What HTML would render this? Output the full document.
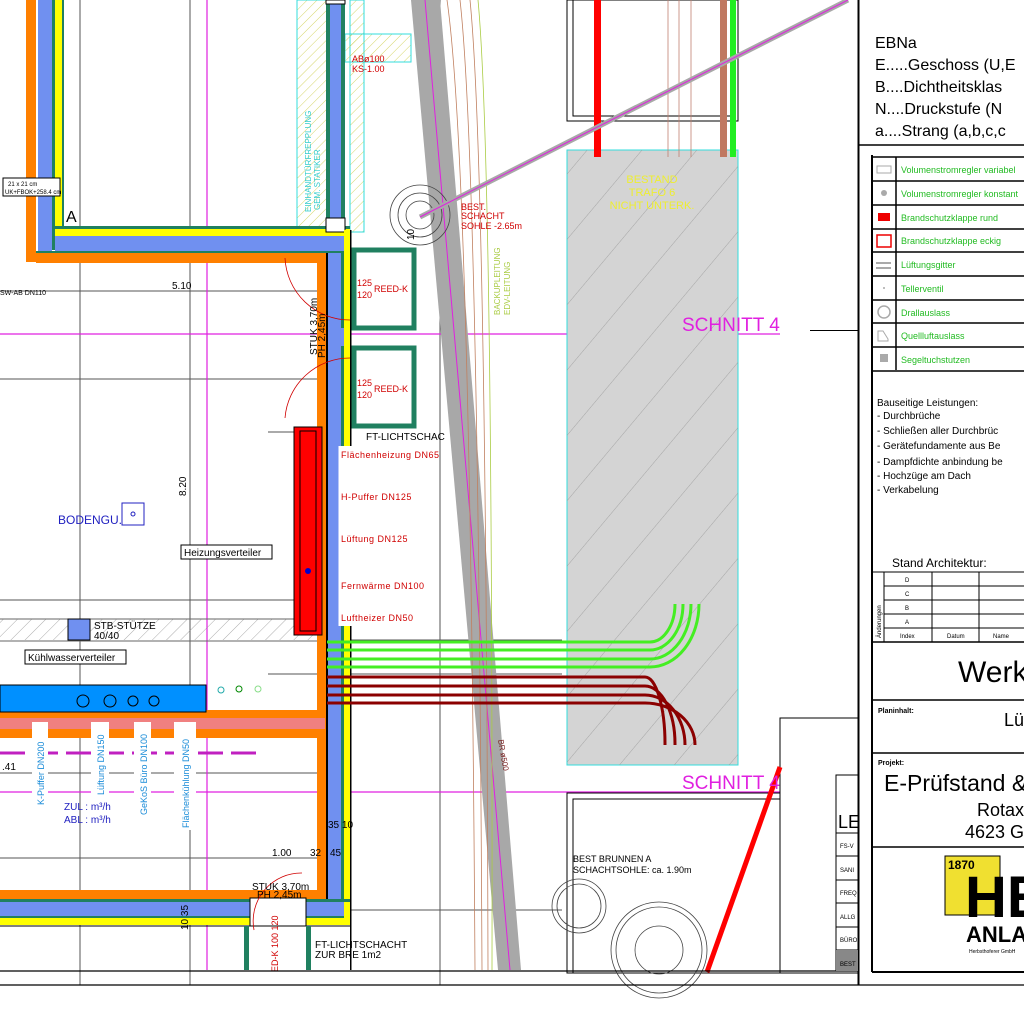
<!DOCTYPE html>
<html><head><meta charset="utf-8"><style>
html,body{margin:0;padding:0;background:#fff;width:1024px;height:1024px;overflow:hidden}
svg{display:block}
text{font-family:"Liberation Sans",sans-serif}
</style></head><body>
<svg width="1024" height="1024" viewBox="0 0 1024 1024" xmlns="http://www.w3.org/2000/svg">
<defs>
<pattern id="h1" width="10" height="10" patternUnits="userSpaceOnUse" patternTransform="rotate(45)"><line x1="0" y1="0" x2="0" y2="10" stroke="#888" stroke-width="0.7"/></pattern>
<pattern id="hy" width="7" height="7" patternUnits="userSpaceOnUse" patternTransform="rotate(45)"><line x1="0" y1="0" x2="0" y2="7" stroke="#cccc44" stroke-width="0.8"/></pattern>
<pattern id="hg" width="42" height="42" patternUnits="userSpaceOnUse" patternTransform="rotate(40)"><line x1="0" y1="0" x2="0" y2="42" stroke="#999" stroke-width="0.8"/></pattern>
</defs>

<!-- grid lines -->
<g stroke="#555" stroke-width="1">
<line x1="80" y1="0" x2="80" y2="985"/>
<line x1="190" y1="0" x2="190" y2="985"/>
<line x1="0" y1="291" x2="330" y2="291"/>
<line x1="0" y1="379" x2="330" y2="379"/>
<line x1="0" y1="600" x2="330" y2="600"/>
<line x1="0" y1="773" x2="330" y2="773"/>
<line x1="0" y1="858" x2="330" y2="858"/>
<line x1="268" y1="432" x2="330" y2="432"/>
<line x1="268" y1="674" x2="330" y2="674"/>
<line x1="440" y1="0" x2="440" y2="985"/>
<line x1="350" y1="640" x2="562" y2="640"/>
<line x1="350" y1="674" x2="562" y2="674"/>
<line x1="350" y1="910" x2="562" y2="910"/>
</g>
<!-- magenta lines -->
<g stroke="#e020e0" stroke-width="1.2">
<line x1="207" y1="0" x2="207" y2="970"/>
<line x1="0" y1="334" x2="780" y2="334"/>
<line x1="0" y1="792" x2="780" y2="792"/>
</g>

<!-- hatched bands -->
<rect x="0" y="619" width="318" height="21" fill="url(#h1)"/>
<line x1="0" y1="619" x2="318" y2="619" stroke="#666"/>
<line x1="0" y1="641" x2="318" y2="641" stroke="#666"/>
<rect x="297" y="0" width="30" height="234" fill="url(#hy)" stroke="#33dddd"/>
<rect x="350" y="0" width="14" height="232" fill="url(#hy)" stroke="#33dddd"/>
<rect x="345" y="34" width="66" height="28" fill="url(#hy)" stroke="#33dddd"/>

<!-- left top wall -->
<rect x="26" y="0" width="10" height="262" fill="#ff8000"/>
<rect x="38" y="0" width="14" height="255" fill="#7090f0"/>
<rect x="52" y="0" width="3" height="250" fill="#208060"/>
<rect x="55" y="0" width="7" height="230" fill="#ffff00"/>
<rect x="62" y="0" width="2" height="226" fill="#208060"/>
<!-- top horizontal wall -->
<rect x="55" y="226" width="295" height="3" fill="#208060"/>
<rect x="55" y="229" width="295" height="7" fill="#ffff00"/>
<rect x="55" y="236" width="290" height="15" fill="#7090f0"/>
<rect x="36" y="251" width="310" height="2" fill="#208060"/>
<rect x="36" y="253" width="290" height="10" fill="#ff8000"/>
<!-- vertical shaft top -->
<rect x="326" y="0" width="19" height="228" fill="#208060"/>
<rect x="330" y="0" width="11" height="228" fill="#7090f0"/>
<rect x="326" y="0" width="19" height="4" fill="#fff" stroke="#000"/>
<rect x="326" y="218" width="19" height="14" fill="#fff" stroke="#000"/>
<!-- right vertical wall -->
<rect x="317" y="253" width="9" height="645" fill="#ff8000"/>
<rect x="326" y="253" width="2" height="665" fill="#000"/>
<rect x="328" y="253" width="13" height="665" fill="#7090f0"/>
<rect x="341" y="253" width="3" height="670" fill="#208060"/>
<rect x="344" y="230" width="6" height="695" fill="#ffff00"/>
<rect x="350" y="230" width="1.5" height="740" fill="#000"/>
<rect x="328" y="328" width="16" height="18" fill="#7090f0"/>
<!-- bottom horizontal wall -->
<rect x="0" y="890" width="326" height="9" fill="#ff8000"/>
<rect x="0" y="899" width="350" height="3" fill="#208060"/>
<rect x="0" y="902" width="344" height="14" fill="#7090f0"/>
<rect x="0" y="916" width="344" height="2" fill="#208060"/>
<rect x="0" y="918" width="350" height="7" fill="#ffff00"/>
<line x1="0" y1="926" x2="350" y2="926" stroke="#000"/>
<rect x="250" y="898" width="56" height="28" fill="#fff" stroke="#000"/>
<rect x="244" y="926" width="5" height="44" fill="#208060"/>
<rect x="306" y="926" width="5" height="44" fill="#208060"/>
<!-- middle walls -->
<rect x="0" y="710" width="325" height="8" fill="#ff8000"/>
<rect x="0" y="718" width="325" height="11" fill="#f08080"/>
<rect x="0" y="729" width="325" height="9" fill="#ff8000"/>
<rect x="0" y="685" width="206" height="27" fill="#0090ff" stroke="#000"/>
<g fill="none" stroke="#000"><circle cx="83" cy="701" r="6"/><circle cx="110" cy="701" r="6"/><circle cx="133" cy="701" r="5"/><circle cx="154" cy="701" r="5"/></g>
<g fill="none" stroke="#2aa" ><circle cx="221" cy="690" r="3"/></g>
<g fill="none" stroke="#080"><circle cx="239" cy="689" r="3"/></g>
<g fill="none" stroke="#8d8"><circle cx="258" cy="689" r="3"/></g>
<line x1="0" y1="753" x2="258" y2="753" stroke="#c020c0" stroke-width="3" stroke-dasharray="25 8"/>
<rect x="68" y="619" width="22" height="21" fill="#7090f0" stroke="#000"/>

<!-- red distributor -->
<rect x="294" y="427" width="28" height="208" fill="#ff0000" stroke="#000"/>
<rect x="300" y="431" width="16" height="200" fill="none" stroke="#000"/>
<circle cx="308" cy="571" r="3" fill="#0000cc"/>

<!-- reed boxes -->
<rect x="354" y="250" width="60" height="78" fill="#fff" stroke="#208060" stroke-width="5"/>
<rect x="354" y="348" width="60" height="78" fill="#fff" stroke="#208060" stroke-width="5"/>
<g fill="none" stroke="#d00000" stroke-width="0.8">
<path d="M285 258 A 65 65 0 0 0 350 320"/>
<path d="M285 418 A 65 65 0 0 1 350 358"/>
<path d="M254 930 A 48 48 0 0 1 302 873"/>
</g>

<!-- gray diagonal band -->
<polygon points="411,0 440,0 521,970 498,970" fill="#a8a8a8"/>
<line x1="425" y1="0" x2="510" y2="970" stroke="#e020e0" stroke-width="1"/>
<g stroke="#c08060" stroke-width="0.8" fill="none">
<path d="M447 0 Q 470 160 475 970"/><path d="M460 0 Q 478 160 482 970"/><path d="M470 0 Q 486 160 488 970"/>
</g>
<path d="M478 0 Q 493 160 492 970" stroke="#aacc44" stroke-width="0.8" fill="none"/>
<g fill="none" stroke="#444" stroke-width="0.8"><circle cx="420" cy="215" r="30"/><circle cx="420" cy="215" r="22"/><circle cx="420" cy="215" r="14"/></g>

<!-- trafo rect -->
<rect x="567" y="150" width="171" height="615" fill="#d4d4d4" stroke="#33dddd"/>
<rect x="567" y="150" width="171" height="615" fill="url(#hg)"/>
<rect x="567" y="0" width="171" height="121" fill="none" stroke="#000"/>
<rect x="573" y="0" width="160" height="116" fill="none" stroke="#000"/>
<g stroke="#c08070" stroke-width="0.8"><line x1="668" y1="0" x2="668" y2="157"/><line x1="679" y1="0" x2="679" y2="157"/><line x1="691" y1="0" x2="691" y2="157"/></g>
<rect x="594" y="0" width="7" height="157" fill="#ff0000"/>
<rect x="720" y="0" width="7" height="157" fill="#c07860"/>
<rect x="730" y="0" width="6" height="157" fill="#22ee22"/>
<line x1="420" y1="217" x2="848" y2="0" stroke="#a8a8a8" stroke-width="5"/>
<line x1="420" y1="217" x2="848" y2="0" stroke="#e020e0" stroke-width="1"/>

<!-- green pipes -->
<g fill="none" stroke="#44ee22" stroke-width="3">
<path d="M327 642 H650 A25 38 0 0 0 675 604"/>
<path d="M327 650 H650 A33 46 0 0 0 683 604"/>
<path d="M327 659 H650 A41 55 0 0 0 691 604"/>
<path d="M327 667 H650 A49 63 0 0 0 699 604"/>
</g>
<g fill="none" stroke="#8b0000" stroke-width="3">
<path d="M327 677 H645 A20 67 0 0 1 665 745"/>
<path d="M327 686 H645 A30 58 0 0 1 675 745"/>
<path d="M327 695 H645 A40 50 0 0 1 685 745"/>
<path d="M327 703 H645 A50 42 0 0 1 695 745"/>
</g>

<!-- brunnen -->
<rect x="567" y="793" width="213" height="180" fill="none" stroke="#000"/>
<rect x="573" y="799" width="207" height="174" fill="none" stroke="#000"/>
<rect x="780" y="718" width="78" height="255" fill="none" stroke="#000"/>
<g fill="none" stroke="#444" stroke-width="0.8"><circle cx="579" cy="906" r="27"/><circle cx="579" cy="906" r="22"/><circle cx="659" cy="950" r="48"/><circle cx="659" cy="950" r="43"/><circle cx="659" cy="950" r="24"/></g>
<line x1="780" y1="767" x2="707" y2="972" stroke="#ff0000" stroke-width="5"/>
<rect x="810" y="330" width="48" height="1" fill="#000"/>

<!-- texts drawing -->
<g font-size="10" fill="#000">
<text x="172" y="289">5.10</text>
<text x="186" y="496" transform="rotate(-90 186 496)">8.20</text>
<text x="272" y="856">1.00</text>
<text x="310" y="856">32</text>
<text x="330" y="856">45</text>
<text x="328" y="828">35 10</text>
<text x="2" y="770">.41</text>
<text x="317" y="355" transform="rotate(-90 317 355)">STUK 3,70m</text>
<text x="325" y="358" transform="rotate(-90 325 358)">PH 2,45m</text>
<text x="252" y="890">STUK 3,70m</text>
<text x="257" y="898">PH 2,45m</text>
<text x="94" y="629">STB-STÜTZE</text>
<text x="94" y="639">40/40</text>
<text x="366" y="440">FT-LICHTSCHAC</text>
<text x="315" y="948">FT-LICHTSCHACHT</text>
<text x="315" y="958">ZUR BRE 1m2</text>
<text x="573" y="862" font-size="9">BEST BRUNNEN A</text>
<text x="573" y="873" font-size="9">SCHACHTSOHLE: ca. 1.90m</text>
<text x="66" y="222" font-size="16">A</text>
<text x="0" y="295" font-size="7">SW-AB DN110</text>
<text x="188" y="930" transform="rotate(-90 188 930)">10 35</text>
<text x="414" y="240" transform="rotate(-90 414 240)">10</text>
</g>
<rect x="181" y="545" width="91" height="14" fill="#fff" stroke="#000"/>
<text x="184" y="556" font-size="10">Heizungsverteiler</text>
<rect x="25" y="650" width="101" height="14" fill="#fff" stroke="#000"/>
<text x="28" y="661" font-size="10">Kühlwasserverteiler</text>
<rect x="3" y="178" width="57" height="18" fill="#fff" stroke="#000"/>
<text x="8" y="186" font-size="6">21 x 21 cm</text>
<text x="5" y="194" font-size="6">UK+FBOK+258.4 cm</text>
<text x="58" y="524" font-size="12" fill="#2020c0">BODENGU.</text>
<rect x="122" y="503" width="22" height="22" fill="none" stroke="#2020c0"/>
<circle cx="133" cy="514" r="2" fill="none" stroke="#2020c0"/>
<g font-size="9" fill="#d00000">
<text x="357" y="286">125</text><text x="357" y="298">120</text><text x="374" y="292">REED-K</text>
<text x="357" y="386">125</text><text x="357" y="398">120</text><text x="374" y="392">REED-K</text>
<text x="352" y="62">ABø100</text><text x="352" y="72">KS-1.00</text>
<text x="461" y="210">BEST.</text><text x="461" y="219">SCHACHT</text><text x="461" y="229">SOHLE  -2.65m</text>
<text x="278" y="972" transform="rotate(-90 278 972)">ED-K 100 120</text>
</g>
<rect x="337" y="446" width="100" height="180" fill="#fff"/>
<line x1="337" y1="446" x2="337" y2="626" stroke="#7090f0" stroke-width="3"/>
<g font-size="9" fill="#d00000" font-family="Liberation Mono" letter-spacing="0.5">
<text x="341" y="458" font-family="Liberation Mono">Flächenheizung DN65</text>
<text x="341" y="500" font-family="Liberation Mono">H-Puffer DN125</text>
<text x="341" y="542" font-family="Liberation Mono">Lüftung DN125</text>
<text x="341" y="589" font-family="Liberation Mono">Fernwärme DN100</text>
<text x="341" y="621" font-family="Liberation Mono">Luftheizer DN50</text>
</g>
<g font-size="9" fill="#1a8cd8" font-family="Liberation Mono">
<rect x="32" y="722" width="16" height="108" fill="#fff"/>
<rect x="91" y="722" width="18" height="108" fill="#fff"/>
<rect x="134" y="722" width="17" height="108" fill="#fff"/>
<rect x="174" y="722" width="22" height="108" fill="#fff"/>
<text x="44" y="805" transform="rotate(-90 44 805)" font-family="Liberation Mono">K-Puffer DN200</text>
<text x="104" y="795" transform="rotate(-90 104 795)" font-family="Liberation Mono">Lüftung DN150</text>
<text x="147" y="815" transform="rotate(-90 147 815)" font-family="Liberation Mono">GeKoS Büro DN100</text>
<text x="189" y="828" transform="rotate(-90 189 828)" font-family="Liberation Mono">Flächenkühlung DN50</text>
</g>
<text x="64" y="810" font-size="10" fill="#2020c0" font-family="Liberation Mono">ZUL :  m³/h</text>
<text x="64" y="823" font-size="10" fill="#2020c0" font-family="Liberation Mono">ABL :  m³/h</text>
<text x="311" y="212" font-size="8" fill="#33cccc" transform="rotate(-90 311 212)">EINHANDTÜRFREPPLUNG</text>
<text x="320" y="210" font-size="8" fill="#33cccc" transform="rotate(-90 320 210)">GEM. STATIKER</text>
<text x="500" y="315" font-size="8" fill="#aacc44" transform="rotate(-90 500 315)">BACKUPLEITUNG</text>
<text x="510" y="315" font-size="8" fill="#aacc44" transform="rotate(-90 510 315)">EDV-LEITUNG</text>
<text x="498" y="740" font-size="8" fill="#7a2020" transform="rotate(80 498 740)">BR ø500</text>
<g font-size="11" fill="#eeee30" text-anchor="middle"><text x="652" y="183">BESTAND</text><text x="652" y="196">TRAFO 6</text><text x="652" y="209">NICHT UNTERK.</text></g>
<text x="682" y="331" font-size="19" fill="#e020e0">SCHNITT 4</text>
<text x="682" y="789" font-size="19" fill="#e020e0">SCHNITT 4</text>

<!-- bottom lines -->
<line x1="0" y1="971" x2="858" y2="971" stroke="#000" stroke-width="1.2"/>
<line x1="0" y1="985" x2="1024" y2="985" stroke="#000" stroke-width="1.2"/>

<!-- right panel -->
<line x1="858.5" y1="0" x2="858.5" y2="985" stroke="#000" stroke-width="2"/>
<g font-size="16" fill="#000">
<text x="875" y="48">EBNa</text>
<text x="875" y="70">E.....Geschoss (U,E</text>
<text x="875" y="92">B....Dichtheitsklas</text>
<text x="875" y="114">N....Druckstufe (N</text>
<text x="875" y="136">a....Strang (a,b,c,c</text>
</g>
<line x1="858" y1="145" x2="1024" y2="145" stroke="#000" stroke-width="1.5"/>
<line x1="872" y1="155" x2="872" y2="972" stroke="#000" stroke-width="2"/>
<g stroke="#000" stroke-width="1.5">
<line x1="872" y1="157" x2="1024" y2="157"/>
<line x1="896" y1="157" x2="896" y2="370"/>
<line x1="872" y1="181" x2="1024" y2="181"/><line x1="872" y1="205" x2="1024" y2="205"/>
<line x1="872" y1="229" x2="1024" y2="229"/><line x1="872" y1="252" x2="1024" y2="252"/>
<line x1="872" y1="276" x2="1024" y2="276"/><line x1="872" y1="300" x2="1024" y2="300"/>
<line x1="872" y1="323" x2="1024" y2="323"/><line x1="872" y1="347" x2="1024" y2="347"/>
<line x1="872" y1="371" x2="1024" y2="371"/>
</g>
<g font-size="9" fill="#22bb22">
<text x="901" y="173">Volumenstromregler variabel</text>
<text x="901" y="197">Volumenstromregler konstant</text>
<text x="901" y="221">Brandschutzklappe rund</text>
<text x="901" y="244">Brandschutzklappe eckig</text>
<text x="901" y="268">Lüftungsgitter</text>
<text x="901" y="292">Tellerventil</text>
<text x="901" y="316">Drallauslass</text>
<text x="901" y="339">Quellluftauslass</text>
<text x="901" y="363">Segeltuchstutzen</text>
</g>
<rect x="877" y="166" width="14" height="7" fill="none" stroke="#aaa"/>
<circle cx="884" cy="193" r="3" fill="#aaa"/>
<rect x="878" y="213" width="12" height="8" fill="#e00"/>
<rect x="877" y="235" width="14" height="12" fill="none" stroke="#e00" stroke-width="1.5"/>
<rect x="876" y="262" width="15" height="2" fill="#aaa"/><rect x="876" y="267" width="15" height="2" fill="#aaa"/>
<circle cx="884" cy="288" r="1" fill="#aaa"/>
<circle cx="884" cy="312" r="6" fill="none" stroke="#aaa" stroke-width="1.5"/>
<path d="M878 341 V331 h5 l5 8 v2 z" fill="none" stroke="#aaa"/>
<rect x="880" y="354" width="8" height="8" fill="#aaa"/>

<g font-size="10" fill="#000">
<text x="877" y="406">Bauseitige Leistungen:</text>
<text x="877" y="419">- Durchbrüche</text>
<text x="877" y="434">- Schließen aller Durchbrüc</text>
<text x="877" y="449">- Gerätefundamente aus Be</text>
<text x="877" y="465">- Dampfdichte anbindung be</text>
<text x="877" y="479">- Hochzüge am Dach</text>
<text x="877" y="493">- Verkabelung</text>
<text x="892" y="567" font-size="12">Stand Architektur:</text>
</g>
<g stroke="#000" stroke-width="1">
<line x1="872" y1="572" x2="1024" y2="572"/><line x1="884" y1="586" x2="1024" y2="586"/>
<line x1="884" y1="600" x2="1024" y2="600"/><line x1="884" y1="614" x2="1024" y2="614"/>
<line x1="884" y1="628" x2="1024" y2="628"/><line x1="872" y1="642" x2="1024" y2="642" stroke-width="1.5"/>
<line x1="884" y1="572" x2="884" y2="642"/><line x1="932" y1="572" x2="932" y2="642"/><line x1="979" y1="572" x2="979" y2="642"/>
</g>
<g font-size="6" fill="#000">
<text x="905" y="582">D</text><text x="905" y="596">C</text><text x="905" y="610">B</text><text x="905" y="624">A</text>
<text x="900" y="638">Index</text><text x="947" y="638">Datum</text><text x="993" y="638">Name</text>
<text x="881" y="638" transform="rotate(-90 881 638)">Änderungen</text>
</g>
<text x="958" y="682" font-size="30" fill="#000">Werk</text>
<line x1="872" y1="700" x2="1024" y2="700" stroke="#000" stroke-width="1.5"/>
<text x="878" y="713" font-size="7" font-weight="bold">Planinhalt:</text>
<text x="1004" y="726" font-size="18">Lüf</text>
<line x1="872" y1="753" x2="1024" y2="753" stroke="#000" stroke-width="1.5"/>
<text x="878" y="765" font-size="7" font-weight="bold">Projekt:</text>
<text x="884" y="791" font-size="23">E-Prüfstand &amp; E</text>
<text x="977" y="816" font-size="18">Rotaxs</text>
<text x="965" y="838" font-size="18">4623 Gu</text>
<line x1="872" y1="847" x2="1024" y2="847" stroke="#000" stroke-width="1.5"/>
<rect x="945" y="856" width="55" height="59" fill="#f0e030" stroke="#000"/>
<text x="948" y="869" font-size="12" font-weight="bold">1870</text>
<text x="965" y="917" font-size="58" font-weight="bold" font-family="Liberation Serif">HE</text>
<text x="966" y="942" font-size="22" font-weight="bold">ANLA</text>
<text x="969" y="953" font-size="5">Herbsthoferer GmbH</text>
<line x1="872" y1="972" x2="1024" y2="972" stroke="#000" stroke-width="2"/>

<!-- LE box -->
<g stroke="#000" stroke-width="1">
<rect x="836" y="775" width="22" height="196" fill="#fff"/>
<line x1="836" y1="833" x2="858" y2="833"/><line x1="836" y1="856" x2="858" y2="856"/>
<line x1="836" y1="880" x2="858" y2="880"/><line x1="836" y1="903" x2="858" y2="903"/>
<line x1="836" y1="927" x2="858" y2="927"/><line x1="836" y1="950" x2="858" y2="950"/>
</g>
<rect x="836" y="950" width="22" height="21" fill="#888"/>
<text x="838" y="828" font-size="18">LE</text>
<g font-size="6"><text x="840" y="848">FS-V</text><text x="840" y="872">SANI</text><text x="840" y="895">FREQ</text><text x="840" y="919">ALLG</text><text x="840" y="942">BÜRO</text><text x="840" y="966">BEST</text></g>
</svg>
</body></html>
